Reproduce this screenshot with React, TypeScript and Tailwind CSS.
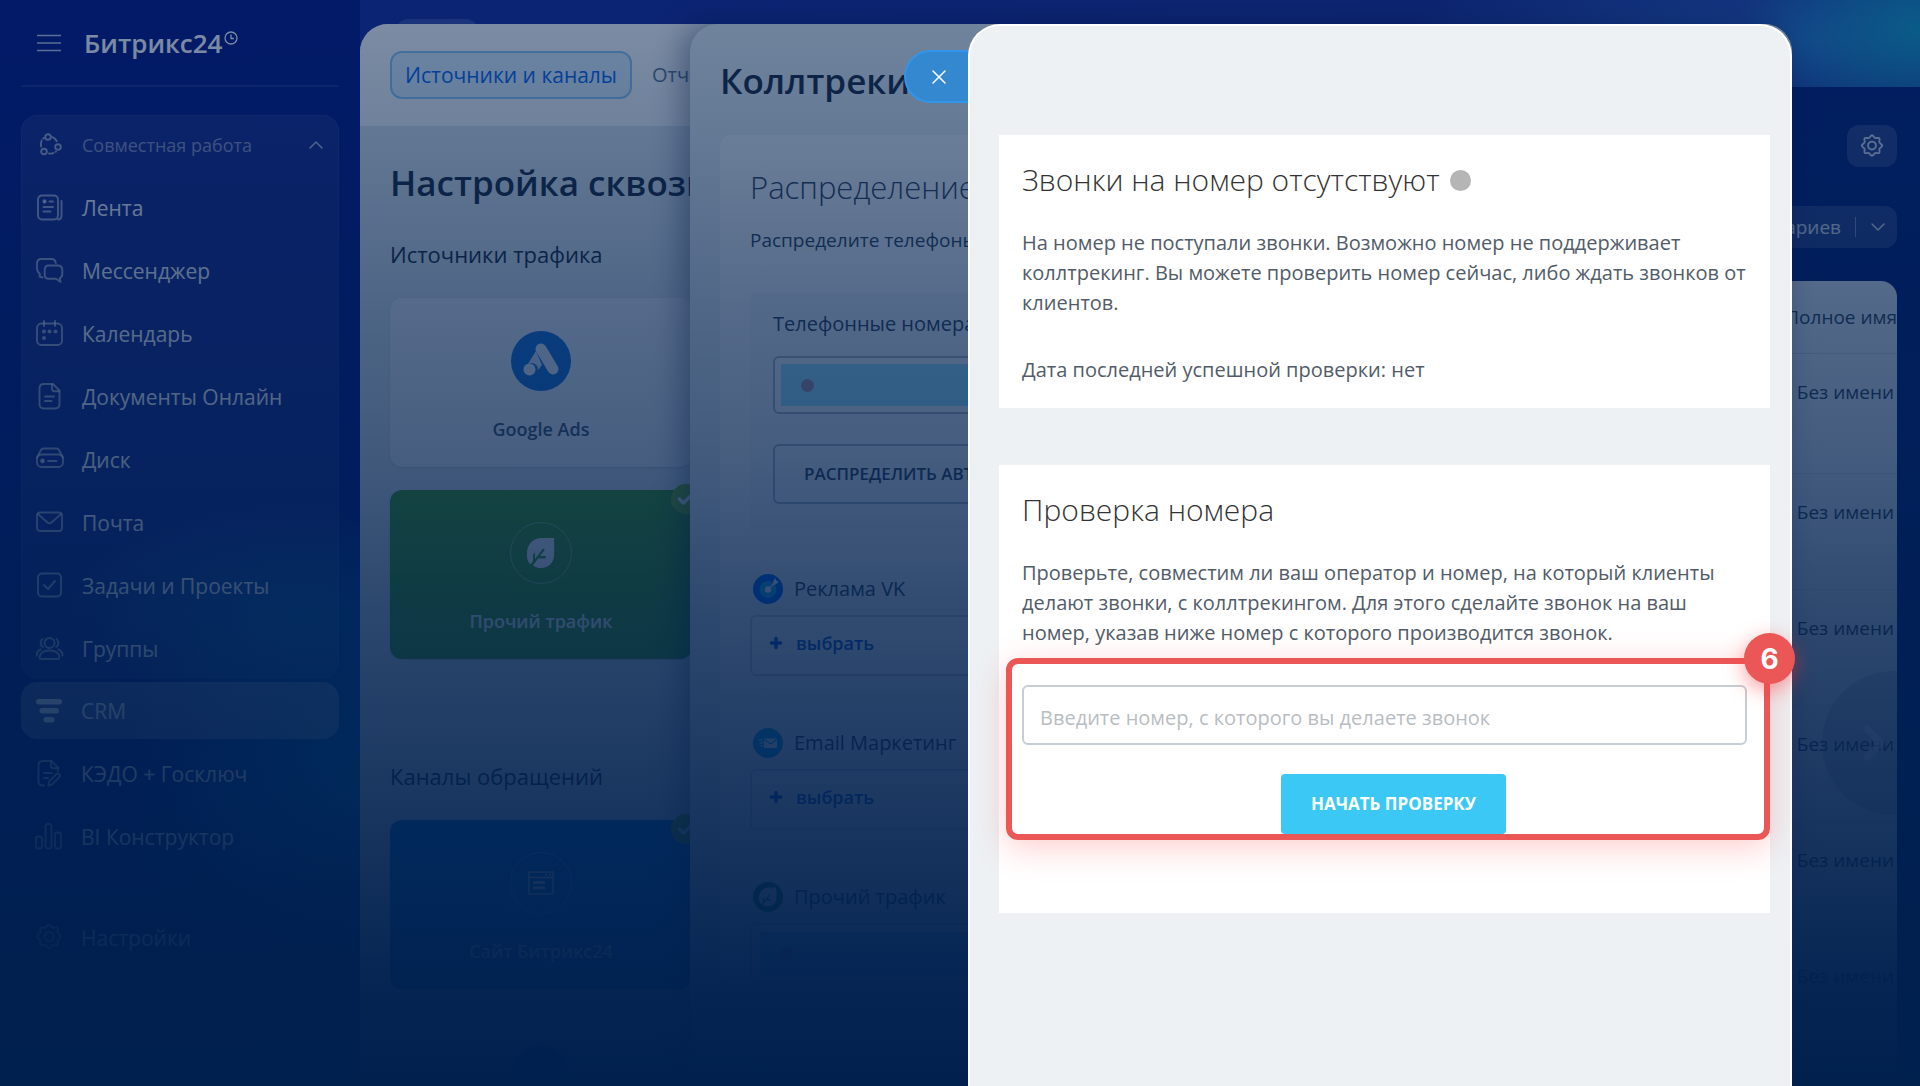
import React from 'react';
import { Check, ChevronDown, ChevronRight, ChevronUp, Plus, X } from 'lucide-react';

type IconName =
  | 'collab'
  | 'feed'
  | 'chat'
  | 'calendar'
  | 'doc'
  | 'disk'
  | 'mail'
  | 'task'
  | 'groups'
  | 'crm'
  | 'sign'
  | 'bi'
  | 'settings';

interface MenuItem {
  icon: IconName;
  label: string;
}

const groupItems: MenuItem[] = [
  { icon: 'feed', label: 'Лента' },
  { icon: 'chat', label: 'Мессенджер' },
  { icon: 'calendar', label: 'Календарь' },
  { icon: 'doc', label: 'Документы Онлайн' },
  { icon: 'disk', label: 'Диск' },
  { icon: 'mail', label: 'Почта' },
  { icon: 'task', label: 'Задачи и Проекты' },
  { icon: 'groups', label: 'Группы' },
];

const contacts = [1, 2, 3, 4, 5, 6];

function GearShape() {
  return (
    <>
      <path d="M14 0.500c1.600 0 2.300 2.600 3.700 3.200 1.500.6 3.700-.9 4.800.2s-.4 3.300.2 4.800c.6 1.400 3.200 2.100 3.200 3.800s-2.600 2.300-3.200 3.700c-.6 1.500.9 3.700-.2 4.800s-3.300-.4-4.800.2c-1.400.6-2.100 3.200-3.700 3.200s-2.300-2.600-3.700-3.200c-1.500-.6-3.700.9-4.800-.2s.4-3.300-.2-4.800c-.6-1.400-3.200-2.100-3.200-3.700s2.600-2.400 3.200-3.800c.6-1.500-.9-3.700.2-4.800s3.300.4 4.800-.2c1.400-.6 2.100-3.200 3.700-3.200z" />
      <circle cx="14" cy="12.500" r="4.600" />
    </>
  );
}

function MenuIcon({ name }: { name: IconName }) {
  const shapes: Record<IconName, React.ReactNode> = {
    collab: (
      <>
        <circle cx="12" cy="6" r="2.800" />
        <circle cx="22" cy="16" r="2.800" />
        <circle cx="8" cy="20.500" r="2.800" />
        <path d="M5 15.500c-.8-3.500.4-6.500 2.800-8.500M16.500 6.200c2.200.9 3.800 2.600 4.600 5" strokeDasharray="6 2.500" />
        <path d="M13 22.500c3 .4 5-.3 7-2" strokeDasharray="4.500 2.500" />
      </>
    ),
    feed: (
      <>
        <rect x="2" y="1.500" width="20" height="24" rx="4" />
        <path d="M25.500 7v14.500c0 2.400-1.200 4-3.500 4M13.500 7.500h3.500M7.500 13h9.500M7.500 17.500h7" />
        <circle cx="8.500" cy="7.500" r="1.200" fill="currentColor" />
      </>
    ),
    chat: (
      <>
        <path d="M6.500 20.500l-3-1 .5-2.500C1.800 15.500 1 13.500 1 11V6.500C1 3.500 3 2 5.500 2h9.800c2.600 0 4.200 1.600 4.500 4" />
        <path d="M13 8.500h8.500c3 0 4.800 1.800 4.800 4.600v4c0 2.200-1 3.400-2.600 4.200l.8 3.700-4.500-3.200H13c-2.700 0-4.300-1.700-4.300-4.300v-4.700c0-2.700 1.600-4.300 4.300-4.300z" />
      </>
    ),
    calendar: (
      <>
        <rect x="1" y="3.500" width="25" height="21.500" rx="4.500" />
        <path d="M8 1v5M19 1v5" />
        <g fill="currentColor" stroke="none">
          <circle cx="8" cy="11.500" r="2" />
          <circle cx="13.500" cy="11.500" r="2" />
          <circle cx="19.500" cy="11.500" r="2" />
          <circle cx="8" cy="18" r="2" />
        </g>
      </>
    ),
    doc: (
      <>
        <path d="M8 1h9l6.500 6.500V21c0 3-1.500 4.500-4.500 4.500H8c-3 0-4.500-1.500-4.500-4.500V5.500C3.500 2.500 5 1 8 1z" />
        <path d="M16 1.500v4.300c0 1.700.8 2.500 2.500 2.500h4.500M9 13.500h9M9 18h6.500" />
      </>
    ),
    disk: (
      <>
        <path d="M1 11.500l4-7.500c.6-1.100 1.300-1.500 2.500-1.500h13c1.200 0 1.900.4 2.500 1.500l4 7.500" />
        <rect x="1" y="8.500" width="26" height="12.500" rx="4.500" />
        <path d="M12 15h8.500" />
        <circle cx="6.500" cy="15" r="1.500" fill="currentColor" />
      </>
    ),
    mail: (
      <>
        <rect x="1" y="3.500" width="25" height="18.500" rx="3" />
        <path d="M2 5l9.500 8.500c1.400 1.200 2.600 1.200 4 0L25 5" />
      </>
    ),
    task: (
      <>
        <rect x="2" y="1.500" width="23" height="23" rx="4" />
        <path d="M8 13l4 4 7-8" />
      </>
    ),
    groups: (
      <>
        <circle cx="13.500" cy="8" r="5" />
        <path d="M3.500 22.500C4 17.500 8 15.500 13.500 15.500s9.500 2 10 7c0 .8-.5 1.500-1.500 1.500H5c-1 0-1.500-.7-1.500-1.500zM6.500 4c-2.600 1.800-2.600 6.500.3 8M20.500 4c2.600 1.800 2.600 6.500-.3 8M4.500 14.500C1.800 15.600.8 18 .9 20.500M22.500 14.500c2.700 1.100 3.900 3.500 4 6" />
      </>
    ),
    crm: (
      <g fill="currentColor" stroke="none">
        <rect x="1" y="2" width="26" height="5.500" rx="2.750" />
        <rect x="4.500" y="11" width="19.500" height="5.500" rx="2.750" />
        <rect x="8.500" y="20" width="11" height="5.500" rx="2.750" />
      </g>
    ),
    sign: (
      <>
        <path d="M9 25.500H7.500c-2.700 0-4-1.500-4-4V5.500C3.500 2.500 5 1 8 1h8.500l6.500 6.500V11" />
        <path d="M16 1.500v4.300c0 1.700.8 2.500 2.500 2.500h4.500M9 13h8M9 18h4M13.500 25.500l.5-4 7.500-7.500c1.800-1.600 4.600 1 3 3L17 24.500z" />
      </>
    ),
    bi: (
      <>
        <rect x="1" y="13.500" width="6" height="12" rx="2.500" />
        <rect x="10.500" y="1" width="6" height="24.500" rx="2.500" />
        <rect x="20" y="9.500" width="6" height="16" rx="2.500" />
      </>
    ),
    settings: <GearShape />,
  };

  return (
    <svg
      viewBox="0 0 28 28"
      className={`size-7 shrink-0 ${name === 'crm' ? 'text-white' : 'text-white/60'}`}
      fill="none"
      stroke="currentColor"
      strokeWidth="1.9"
      strokeLinecap="round"
      strokeLinejoin="round"
    >
      {shapes[name]}
    </svg>
  );
}

function MenuLink({ item, active }: { item: MenuItem; active?: boolean }) {
  return (
    <a
      href="#"
      className={`flex h-[57px] items-center gap-[18px] rounded-2xl px-[14px] text-[21px] text-white ${active ? 'bg-white/30' : ''}`}
    >
      <MenuIcon name={item.icon} />
      <span className="pt-[2px]">{item.label}</span>
    </a>
  );
}

function Sidebar() {
  return (
    <aside className="w-[360px] shrink-0 px-[21px]">
      <div className="flex h-[87px] items-center gap-[23px] border-b-2 border-white/10 pl-4 text-white">
        <button aria-label="Меню">
          <svg viewBox="0 0 24 18" className="w-6" fill="none" stroke="currentColor" strokeWidth="1.6">
            <path d="M0.500 1.500h23M0.500 9h23M0.500 16.500h23" strokeLinecap="round" opacity="0.75" />
          </svg>
        </button>
        <div className="flex items-start text-[26px] leading-8 font-semibold">
          Битрикс24
          <svg viewBox="0 0 14 14" className="mt-1 ml-[2px] size-[14px]" fill="none" stroke="currentColor" strokeWidth="1.3">
            <circle cx="7" cy="7" r="6" />
            <path d="M7 3.500V7.500h3" />
          </svg>
        </div>
      </div>

      <nav>
        <div className="mt-7 flex flex-col gap-[6px] rounded-2xl border border-white/5 bg-white/8">
          <button className="flex h-[57px] items-center gap-[18px] px-[14px] text-left text-lg text-white/50">
            <MenuIcon name="collab" />
            <span className="flex-1">Совместная работа</span>
            <ChevronUp className="-mr-1 size-6 text-white/70" strokeWidth={1.5} />
          </button>
          {groupItems.map((item) => (
            <MenuLink key={item.label} item={item} />
          ))}
        </div>
        <div className="mt-1 flex flex-col gap-[6px]">
          <MenuLink item={{ icon: 'crm', label: 'CRM' }} active />
          <MenuLink item={{ icon: 'sign', label: 'КЭДО + Госключ' }} />
          <MenuLink item={{ icon: 'bi', label: 'BI Конструктор' }} />
        </div>
        <div className="mt-11">
          <MenuLink item={{ icon: 'settings', label: 'Настройки' }} />
        </div>
      </nav>
    </aside>
  );
}

function CrmPage() {
  return (
    <main className="flex min-w-0 flex-1 flex-col bg-[#031c74]">
      <header className="h-[87px] bg-[radial-gradient(ellipse_180px_110px_at_100%_30px,#149ac4,transparent),radial-gradient(ellipse_420px_90px_at_93%_40px,#2f62c8,transparent),linear-gradient(90deg,#16289a,#1c2a94)] px-9 pt-[19px]">
        <div className="h-12 w-[82px] rounded-xl bg-white/15" />
      </header>
      <div className="flex flex-1 flex-col items-end pt-[38px] pr-[23px]">
        <button aria-label="Настройки" className="flex h-[42px] w-[50px] items-center justify-center rounded-xl bg-white/15 text-white/80">
          <svg viewBox="0 0 28 26" className="size-6" fill="none" stroke="currentColor" strokeWidth="2.2">
            <GearShape />
          </svg>
        </button>
        <button className="mt-[39px] flex h-[42px] items-center rounded-xl bg-white/15 pr-[7px] pl-5 text-[19px] text-white/80">
          Сценариев
          <span className="mr-[10px] ml-[14px] h-5 w-px bg-white/40" />
          <ChevronDown className="size-6" strokeWidth={1.5} />
        </button>
        <div className="relative mt-[33px] w-full flex-1 overflow-hidden rounded-2xl bg-[#e9edf4]">
          <table className="w-full text-right text-[19px] text-slate-700">
            <thead>
              <tr className="h-[72px] border-b border-slate-300">
                <th className="font-normal">Полное имя</th>
              </tr>
            </thead>
            <tbody>
              {contacts.map((id) => (
                <tr key={id} className="h-29 border-b border-slate-300/60 first:h-30">
                  <td className="pt-6 pr-[3px] align-top">Без имени</td>
                </tr>
              ))}
            </tbody>
          </table>
          <div className="absolute top-[390px] -right-[69px] flex size-36 items-center rounded-full bg-slate-500/25 pl-6">
            <ChevronRight className="size-14 text-white/60" strokeWidth={3} />
          </div>
        </div>
      </div>
    </main>
  );
}

function LeafShape() {
  return (
    <>
      <path d="M30 1v17c0 9-6 15-14.500 15-3 0-6-1-8-3L20 13.500l-1.700-1.200L9.500 23.500v-7l-2 2v7.500L4.500 29C2 26 1 23 1 18.500 1 8 7 1 17 1z" fill="#fff" />
      <path d="M13 21.500h8" stroke="currentColor" strokeWidth="2.500" />
    </>
  );
}

function SourceCard({ label, tone, children }: { label: string; tone: 'white' | 'green' | 'blue'; children: React.ReactNode }) {
  const tones = {
    white: 'bg-[#f3f5fa] text-slate-600',
    green: 'bg-[#46a01d] text-white',
    blue: 'bg-[#0f78d8] text-white',
  };

  return (
    <div className={`relative flex h-[169px] flex-col items-center rounded-xl pt-8 shadow ${tones[tone]}`}>
      <div className="flex h-[62px] items-center">{children}</div>
      <div className="mt-[23px] text-lg font-semibold">{label}</div>
      {tone !== 'white' && (
        <span className="absolute -top-[6px] -right-[9px] flex size-[30px] items-center justify-center rounded-full bg-[#7bbf1e] text-white">
          <Check className="size-5" strokeWidth={4} />
        </span>
      )}
    </div>
  );
}

function AnalyticsPanel() {
  return (
    <section className="absolute top-6 right-32 bottom-0 left-[360px] overflow-hidden rounded-t-[28px] bg-[#dfe7ec]">
      <div className="bg-white/90">
        <div className="flex h-[102px] w-[330px] gap-1 overflow-hidden pt-[27px] pl-[30px] text-xl">
          <button className="h-12 rounded-xl border-2 border-[#8fc6f3] bg-[#e0f0fd] px-[13px] pt-[2px] text-[21px] whitespace-nowrap text-[#0664f0]">
            Источники и каналы
          </button>
          <button className="h-12 px-4 text-slate-500">Отчёты</button>
        </div>
      </div>
      <div className="w-[330px] overflow-hidden pl-[30px]">
        <h1 className="mt-8 text-[35px] leading-[50px] font-semibold whitespace-nowrap text-slate-800">
          Настройка сквозной
        </h1>
        <h2 className="mt-[30px] text-[22px] leading-8 text-slate-800">Источники трафика</h2>
        <div className="mt-[28px] flex w-[302px] flex-col gap-[23px]">
          <SourceCard label="Google Ads" tone="white">
            <svg viewBox="0 0 60 60" className="size-[60px]">
              <circle cx="30" cy="30" r="30" fill="#1a73d8" />
              <path d="M25 20l6 14-4 5c0-5-4-8-10-6z" fill="#dfe7ff" />
              <path d="M30 18l12 20" stroke="#eef2ff" strokeWidth="11" strokeLinecap="round" />
              <circle cx="18.500" cy="38.500" r="6" fill="#eef2ff" />
            </svg>
          </SourceCard>
          <SourceCard label="Прочий трафик" tone="green">
            <div className="flex size-[62px] items-center justify-center rounded-full border border-white/40">
              <svg viewBox="0 0 32 34" className="size-8 text-[#46a01d]">
                <LeafShape />
              </svg>
            </div>
          </SourceCard>
        </div>
        <h2 className="mt-[101px] text-[22px] leading-8 text-slate-800">Каналы обращений</h2>
        <div className="mt-[28px] w-[302px]">
          <SourceCard label="Сайт Битрикс24" tone="blue">
            <div className="flex size-[62px] items-center justify-center rounded-full border border-white/40">
              <svg viewBox="0 0 26 24" className="w-[26px]" fill="none" stroke="#fff" strokeWidth="1.5">
                <path d="M1 1h24v22H1zM1 6.500h24M17 3.800h2M21 3.800h2" />
                <path d="M5 11.500h12M5 17h12" strokeWidth="3" />
              </svg>
            </div>
          </SourceCard>
        </div>
        <div className="mx-auto mt-14 size-14 rounded-full bg-[#0f78d8]" />
      </div>
    </section>
  );
}

function ChannelRow({ icon, label, children }: { icon: React.ReactNode; label: string; children?: React.ReactNode }) {
  return (
    <div>
      <div className="flex h-[30px] items-center gap-[11px] pl-[3px] text-xl whitespace-nowrap text-slate-700">
        {icon}
        {label}
      </div>
      <div className="mt-[11px] flex h-[61px] items-center rounded-md border-2 border-slate-300 bg-white/40">
        {children || (
          <button className="flex items-center gap-3 pb-[6px] pl-4 text-lg font-semibold text-[#1058d0]">
            <Plus className="size-4" strokeWidth={5} />
            выбрать
          </button>
        )}
      </div>
    </div>
  );
}

function CalltrackingPanel() {
  return (
    <section className="absolute top-6 right-32 bottom-0 left-[690px] rounded-t-[28px] bg-[#e5ecf0] shadow-[-8px_0_30px_rgba(0,10,50,0.4)]">
      <div className="w-[279px] overflow-hidden">
        <h1 className="pt-8 pl-[30px] text-[35px] leading-[50px] font-semibold text-slate-800">Коллтрекинг</h1>
        <div className="mt-[29px] ml-[30px] w-[800px] rounded-xl bg-[#f3f5f8] px-[30px] pt-7">
          <div className="w-[219px] overflow-hidden whitespace-nowrap">
            <h2 className="text-[31px] leading-12 font-light text-slate-700">Распределение</h2>
            <p className="mt-[14px] text-[19px] leading-[30px] text-slate-700">Распределите телефоны</p>
          </div>
          <div className="mt-[38px] h-[237px] bg-slate-200/40 px-[23px] pt-4">
            <div className="text-xl leading-[30px] text-slate-700">Телефонные номера</div>
            <div className="mt-[17px] h-[58px] rounded-md border-2 border-[#a9b4c4] bg-white/40 p-[6px]">
              <div className="flex h-full items-center bg-[#9de2fb] pl-5">
                <span className="size-[13px] rounded-full bg-[#a88fa2]" />
              </div>
            </div>
            <button className="mt-[30px] h-[60px] w-[400px] rounded-md border-2 border-[#a9b4c4] pl-[29px] text-left text-[17px] font-semibold whitespace-nowrap text-slate-700">
              РАСПРЕДЕЛИТЬ АВТО
            </button>
          </div>
          <div className="mt-11 flex flex-col gap-[52px]">
            <ChannelRow
              label="Реклама VK"
              icon={
                <svg viewBox="0 0 30 30" className="size-[30px]">
                  <circle cx="15" cy="15" r="15" fill="#0069ff" />
                  <circle cx="15" cy="15.500" r="8.500" fill="#14b9f5" />
                  <circle cx="15" cy="15.500" r="3.200" fill="#fff" />
                  <path d="M16 14l4-4.500.3-2.500L22.500 4l.8 2.800 2.500.7-3 3-2.300.5-4 4z" fill="#fff" />
                </svg>
              }
            />
            <ChannelRow
              label="Email Маркетинг"
              icon={
                <svg viewBox="0 0 30 30" className="size-[30px]">
                  <circle cx="15" cy="15" r="15" fill="#0faaf0" />
                  <rect x="11" y="10.500" width="13" height="9.500" rx="1" fill="#fff" />
                  <path d="M11.500 11.500l6 4.500 6-4.500" fill="none" stroke="#0faaf0" strokeWidth="1.200" />
                  <path d="M5.500 12H10M6.500 15H10M7.500 18H10" stroke="#fff" strokeWidth="1.200" />
                </svg>
              }
            />
            <ChannelRow
              label="Прочий трафик"
              icon={
                <svg viewBox="-9 -8 50 50" className="size-[30px] text-[#1f8a3c]">
                  <circle cx="16" cy="17" r="25" fill="currentColor" />
                  <LeafShape />
                </svg>
              }
            >
              <div className="mx-2 flex h-11 flex-1 items-center bg-[#5fc4ec]/60 pl-5">
                <span className="size-[13px] rounded-full bg-[#a88fa2]" />
              </div>
            </ChannelRow>
          </div>
        </div>
      </div>
    </section>
  );
}

function CheckPanel() {
  return (
    <section className="absolute top-6 right-32 bottom-0 left-[968px]">
      <button
        aria-label="Закрыть"
        className="absolute top-[26px] right-full flex h-[53px] w-16 items-center justify-center rounded-l-full border-2 border-r-0 border-[#2f96ec] bg-[#3388d0] pl-1 text-white"
      >
        <X className="size-6" strokeWidth={1.5} />
      </button>
      <div className="h-full rounded-t-[32px] border-2 border-b-0 border-white bg-[#edf1f4] pt-[109px] pr-5 pl-[29px] text-[#525c69]">
        <div className="bg-white px-[23px] pt-[21px] pb-[23px]">
          <h2 className="flex items-center gap-[10px] text-[30px] leading-12 font-light text-[#333]">
            Звонки на номер отсутствуют
            <span className="size-[21px] rounded-full bg-[#b5b5b5]" />
          </h2>
          <p className="mt-6 text-xl leading-[30px] whitespace-nowrap">
            На номер не поступали звонки. Возможно номер не поддерживает
            <br />
            коллтрекинг. Вы можете проверить номер сейчас, либо ждать звонков от
            <br />
            клиентов.
          </p>
          <p className="mt-[37px] text-xl leading-[30px]">Дата последней успешной проверки: нет</p>
        </div>

        <div className="mt-[57px] bg-white px-[23px] pt-[21px] pb-[79px]">
          <h2 className="text-[30px] leading-12 font-light text-[#333]">Проверка номера</h2>
          <p className="mt-6 text-xl leading-[30px] whitespace-nowrap">
            Проверьте, совместим ли ваш оператор и номер, на который клиенты
            <br />
            делают звонки, с коллтрекингом. Для этого сделайте звонок на ваш
            <br />
            номер, указав ниже номер с которого производится звонок.
          </p>
          <form className="relative mt-[37px] flex flex-col items-center" onSubmit={(e) => e.preventDefault()}>
            <input
              type="tel"
              aria-label="Номер, с которого вы делаете звонок"
              placeholder="Введите номер, с которого вы делаете звонок"
              className="h-[60px] w-full rounded-md border-2 border-[#c6cdd3] px-4 pt-1 text-xl placeholder:text-[#b9bdc2]"
            />
            <button className="mt-[29px] ml-[18px] h-[60px] rounded bg-[#3bc8f5] px-[30px] text-[17px] font-bold text-white">
              НАЧАТЬ ПРОВЕРКУ
            </button>
            {/* step highlight drawn over the form */}
            <div className="pointer-events-none absolute -top-[27px] -right-[23px] -bottom-[6px] -left-4 rounded-xl border-6 border-[#eb5757] shadow-[0_8px_32px_rgba(255,60,60,0.25)]">
              <span className="absolute -top-[31px] -right-[31px] flex size-[51px] items-center justify-center rounded-full bg-[#eb5757] font-[Inter,sans-serif] text-[28px] font-bold text-white shadow-[0_6px_20px_rgba(255,60,60,0.5)]">
                6
              </span>
            </div>
          </form>
        </div>
      </div>
    </section>
  );
}

export default function App() {
  return (
    <div className="relative h-screen min-h-[1000px] overflow-hidden bg-[#041482] bg-[radial-gradient(ellipse_240px_120px_at_300px_620px,#004c9c,transparent),radial-gradient(ellipse_260px_200px_at_380px_780px,#0070b0,transparent)] font-['Open_Sans','Noto_Sans',sans-serif]">
      <div className="flex h-full">
        <Sidebar />
        <CrmPage />
      </div>
      <AnalyticsPanel />
      <CalltrackingPanel />
      <div className="pointer-events-none absolute inset-0 bg-linear-[180deg,rgba(0,32,78,0.5)_0%,rgba(0,32,78,0.56)_12%,rgba(0,32,78,0.65)_28%,rgba(0,32,78,0.71)_42%,rgba(0,32,78,0.80)_56%,rgba(0,32,78,0.89)_74%,rgba(0,32,78,0.98)_92%,rgb(0,32,78)_100%]" />
      <CheckPanel />
    </div>
  );
}
